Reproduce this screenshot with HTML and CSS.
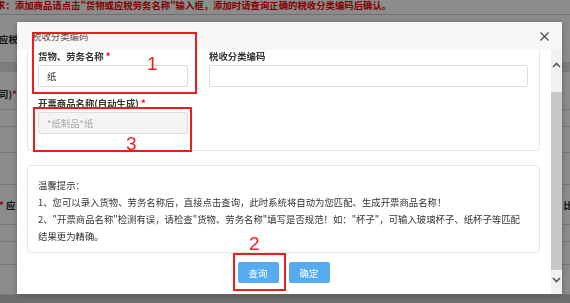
FILE: index.html
```html
<!DOCTYPE html>
<html lang="zh-CN">
<head>
  <meta charset="UTF-8">
  <meta name="viewport" content="width=device-width, initial-scale=1">
  <title>税收分类编码</title>
  <link rel="stylesheet" href="styles.css">
</head>
<body>
  <div class="page">
    <p class="notice">求：添加商品请点击&quot;货物或应税劳务名称&quot;输入框，添加时请查询正确的税收分类编码后确认。</p>
    <div class="rows">
      <div class="row h48"><span class="cell">应税</span></div>
      <div class="row band"></div>
      <div class="row h38"><span class="cell">司)<i>*</i></span></div>
      <div class="row h17"></div>
      <div class="row h26"></div>
      <div class="row h32"></div>
      <div class="row h40"><span class="cell"><i>*</i> 应</span><span class="cell-r">比</span></div>
      <div class="row h17"></div>
      <div class="row h23"></div>
      <div class="row h30"></div>
      <div class="row foot"></div>
    </div>
  </div>

  <div class="mask"></div>

  <div class="modal">
    <div class="modal-head">
      <span class="modal-title">税收分类编码</span>
      <svg class="close" width="9" height="9" viewBox="0 0 9 9"><path d="M0.5 0.5 L8.5 8.5 M8.5 0.5 L0.5 8.5" stroke="#444" stroke-width="1.1" fill="none"/></svg>
    </div>
    <div class="modal-main">
      <div class="modal-content">
        <div class="panel panel-form">
          <div class="form-grid">
            <div class="field">
              <label>货物、劳务名称 <i>*</i></label>
              <input class="text-input" value="纸">
            </div>
            <div class="field">
              <label>税收分类编码</label>
              <input class="text-input">
            </div>
            <div class="field field-gen">
              <label>开票商品名称(自动生成) <i>*</i></label>
              <input class="text-input disabled" value="*纸制品*纸" disabled>
            </div>
          </div>
        </div>

        <div class="panel tips">
          <p>温馨提示：</p>
          <p>1、您可以录入货物、劳务名称后，直接点击查询，此时系统将自动为您匹配、生成开票商品名称！</p>
          <p>2、&quot;开票商品名称&quot;检测有误，请检查&quot;货物、劳务名称&quot;填写是否规范！如：&quot;杯子&quot;，可输入玻璃杯子、纸杯子等匹配结果更为精确。</p>
        </div>

        <div class="actions">
          <button class="btn">查询</button>
          <button class="btn">确定</button>
        </div>
      </div>
      <div class="scrollbar">
        <div class="sb-up"><svg width="9" height="6" viewBox="0 0 9 6"><path d="M1 5 L4.5 1.5 L8 5" stroke="#555" stroke-width="1.6" fill="none"/></svg></div>
        <div class="sb-thumb"></div>
        <div class="sb-down"><svg width="9" height="6" viewBox="0 0 9 6"><path d="M1 1 L4.5 4.5 L8 1" stroke="#555" stroke-width="1.6" fill="none"/></svg></div>
      </div>
    </div>
  </div>

  <!-- annotation boxes drawn over the dialog -->
  <div class="mark m1"><span class="num n1">1</span></div>
  <div class="mark m2"><span class="num n2">2</span></div>
  <div class="mark m3"><span class="num n3">3</span></div>
</body>
</html>
```

FILE: styles.css
```css
* {
  box-sizing: border-box;
}

body {
  margin: 0;
  width: 570px;
  height: 303px;
  overflow: hidden;
  background: #fff;
  color: #333;
  font-family: "Noto Sans CJK SC", "Noto Sans", sans-serif;
  font-size: 9.4px;
}

i {
  font-style: normal;
  color: #f00;
}

/* page behind the dialog */
.notice {
  margin: 0;
  height: 15px;
  line-height: 10px;
  color: #e00;
  font-weight: bold;
  text-indent: -4px;
  white-space: nowrap;
  overflow: hidden;
  border-bottom: 1px solid #ccc;
}

.rows {
  display: flex;
  flex-direction: column;
}

.row {
  display: flex;
  align-items: center;
  border-bottom: 1px solid #ddd;
  font-weight: bold;
  color: #222;
  white-space: nowrap;
}

.cell {
  margin-left: -1px;
}

.cell-r {
  margin-left: auto;
  margin-right: -3px;
}

.h48 { height: 48px; }
.h38 { height: 38px; padding-top: 6px; }
.h17 { height: 17px; }
.h26 { height: 26px; }
.h32 { height: 32px; }
.h40 { height: 40px; }
.h23 { height: 23px; }
.h30 { height: 30px; }

.band {
  height: 9px;
  background: #e4e4e4;
}

.foot {
  height: 20px;
  background: #c8c8c8;
  border: 0;
}

.mask {
  position: fixed;
  inset: 0;
  background: rgba(0, 0, 0, 0.45);
}

/* dialog */
.modal {
  position: fixed;
  left: 17px;
  top: 22px;
  width: 545px;
  height: 272px;
  background: #fff;
  display: flex;
  flex-direction: column;
  box-shadow: 0 1px 6px rgba(0, 0, 0, 0.3);
}

.modal-head {
  height: 28px;
  flex: none;
  background: #f7f7f7;
  display: flex;
  align-items: center;
  justify-content: space-between;
  padding: 0 13px 0 15px;
  color: #555;
}

.modal-main {
  flex: 1;
  min-height: 0;
  display: flex;
}

.modal-content {
  flex: 1;
  overflow: hidden;
  padding: 0 11px 0 10px;
}

.panel {
  border: 1px solid #e6e6e6;
  border-radius: 4px;
}

.panel-form {
  border-top: 0;
  border-radius: 0 0 4px 4px;
  padding: 0 11px 16px 10px;
}

.form-grid {
  display: grid;
  grid-template-columns: 150px 1fr;
  column-gap: 21px;
  row-gap: 10px;
}

.field label {
  display: block;
  line-height: 12px;
  margin-bottom: 3px;
  font-weight: bold;
  color: #333;
}

.text-input {
  display: block;
  width: 100%;
  height: 22px;
  margin: 0;
  padding: 0 8px;
  border: 1px solid #dcdcdc;
  border-radius: 2px;
  background: #fff;
  font: inherit;
  color: #333;
  outline: none;
}

.text-input.disabled {
  background: #f4f4f4;
  color: #aaa;
}

.tips {
  margin-top: 14px;
  padding: 11px 10px 7px;
  line-height: 17px;
  color: #333;
}

.tips p {
  margin: 0;
}

.actions {
  display: flex;
  justify-content: center;
  gap: 10px;
  margin-top: 9px;
}

.btn {
  width: 41px;
  height: 21px;
  padding: 0;
  border: 0;
  border-radius: 2px;
  background: #57acf1;
  color: #fff;
  font: inherit;
}

.scrollbar {
  width: 11px;
  flex: none;
  display: flex;
  flex-direction: column;
  background: #f1f1f1;
}

.sb-up {
  height: 42px;
  display: flex;
  justify-content: center;
  padding-top: 12px;
}

.sb-thumb {
  flex: 1;
  background: #c8c8c8;
}

.sb-down {
  height: 24px;
  display: flex;
  justify-content: center;
  padding-top: 7px;
}

/* red annotation boxes */
.mark {
  position: absolute;
  border: 2px solid #ee1c1c;
}

.num {
  position: absolute;
  font-family: "Liberation Sans", Arial, sans-serif;
  font-size: 19px;
  line-height: 19px;
  color: #ee1c1c;
}

.m1 { left: 32px; top: 32px; width: 165px; height: 62px; }
.m2 { left: 233px; top: 253px; width: 53px; height: 38px; }
.m3 { left: 33px; top: 107px; width: 159px; height: 45px; }

.n1 { left: 113px; top: 20px; }
.n2 { left: 14px; top: -21px; }
.n3 { left: 91px; top: 25px; }
```
